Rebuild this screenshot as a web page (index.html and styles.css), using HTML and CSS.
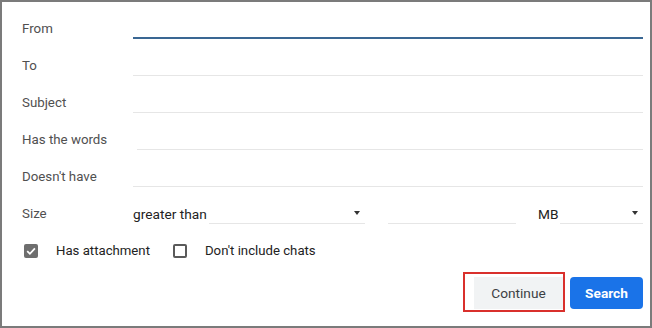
FILE: index.html
```html
<!DOCTYPE html>
<html>
<head>
<meta charset="utf-8">
<link rel="stylesheet" href="styles.css">
</head>
<body>
<div class="dialog">
  <div class="row">
    <div class="label">From</div>
    <div class="field field-active"></div>
  </div>
  <div class="row">
    <div class="label">To</div>
    <div class="field"></div>
  </div>
  <div class="row">
    <div class="label">Subject</div>
    <div class="field"></div>
  </div>
  <div class="row">
    <div class="label">Has the words</div>
    <div class="field field-inset"></div>
  </div>
  <div class="row">
    <div class="label">Doesn't have</div>
    <div class="field"></div>
  </div>
  <div class="row">
    <div class="label">Size</div>
    <div class="size-field">
      <div class="select select-op">
        <span class="select-text">greater than</span>
        <span class="select-line"><span class="arrow"></span></span>
      </div>
      <div class="size-input"></div>
      <div class="select select-unit">
        <span class="select-text">MB</span>
        <span class="select-line"><span class="arrow"></span></span>
      </div>
    </div>
  </div>
  <div class="checks">
    <div class="check">
      <span class="box box-on"><svg width="14" height="14" viewBox="0 0 14 14"><polyline points="3.2,7.2 5.9,9.8 10.9,4.4" fill="none" stroke="#fff" stroke-width="1.8"/></svg></span>
      <span class="check-text">Has attachment</span>
    </div>
    <div class="check">
      <span class="box box-off"></span>
      <span class="check-text">Don't include chats</span>
    </div>
  </div>
  <div class="buttons">
    <div class="btn-wrap">
      <button class="btn btn-continue">Continue</button>
      <span class="highlight"></span>
    </div>
    <button class="btn btn-search">Search</button>
  </div>
</div>
</body>
</html>
```

FILE: styles.css
```css
html, body {
  margin: 0;
  padding: 0;
  background: #ffffff;
}

.dialog {
  width: 652px;
  height: 328px;
  box-sizing: border-box;
  border: 2px solid #7b7b7b;
  padding: 0 7px 0 20px;
  font-family: Roboto, "Liberation Sans", Arial, sans-serif;
  background: #ffffff;
}

.row {
  display: flex;
  height: 37px;
}

.label {
  width: 111px;
  align-self: flex-end;
  padding-bottom: 2px;
  line-height: 16px;
  font-size: 13.3px;
  color: #505050;
}

.field {
  flex: 1;
  box-sizing: border-box;
  border-bottom: 1px solid #e6e6e6;
}

.field-active {
  border-bottom: 2px solid #3a6793;
}

.field-inset {
  margin-left: 4px;
}

.size-field {
  flex: 1;
  display: flex;
}

.select {
  display: flex;
  align-items: flex-end;
}

.select-op {
  width: 232px;
}

.select-unit {
  flex: 1;
}

.select-text {
  font-size: 13.7px;
  line-height: 16px;
  padding-bottom: 2px;
  color: #222222;
}

.select-line {
  flex: 1;
  margin-left: 2px;
  height: 100%;
  box-sizing: border-box;
  border-bottom: 1px solid #e6e6e6;
  display: flex;
  justify-content: flex-end;
  align-items: flex-end;
}

.arrow {
  width: 0;
  height: 0;
  border-left: 3.5px solid transparent;
  border-right: 3.5px solid transparent;
  border-top: 4px solid #333333;
  margin: 0 5px 8px 0;
}

.size-input {
  width: 128px;
  margin: 0 22px 0 23px;
  box-sizing: border-box;
  border-bottom: 1px solid #e6e6e6;
}

.checks {
  display: flex;
  align-items: center;
  padding: 20px 0 0 2px;
  height: 14px;
}

.check {
  display: flex;
  align-items: center;
}

.box {
  width: 14px;
  height: 14px;
  box-sizing: border-box;
  border-radius: 2px;
  display: block;
}

.box svg {
  display: block;
}

.box-on {
  background: #6e6e6e;
}

.box-off {
  border: 2px solid #5a5a5a;
  margin-left: 23px;
}

.check-text {
  margin-left: 18px;
  font-size: 13.2px;
  line-height: 16px;
  color: #222222;
}

.buttons {
  display: flex;
  justify-content: flex-end;
  margin-top: 19px;
  gap: 7px;
}

.btn-wrap {
  position: relative;
  display: flex;
}

.btn {
  height: 32px;
  border: none;
  border-radius: 4px;
  font-family: Roboto, "Liberation Sans", Arial, sans-serif;
  font-size: 13.7px;
  padding: 0;
  cursor: pointer;
}

.btn-continue {
  width: 89px;
  background: #f1f3f4;
  color: #3c4043;
  border-radius: 0;
}

.btn-search {
  width: 73px;
  background: #1a73e8;
  color: #ffffff;
  font-weight: bold;
}

.highlight {
  position: absolute;
  left: -11px;
  right: -2px;
  top: -5px;
  bottom: -3px;
  border: 2px solid #d9302c;
  pointer-events: none;
}
```
